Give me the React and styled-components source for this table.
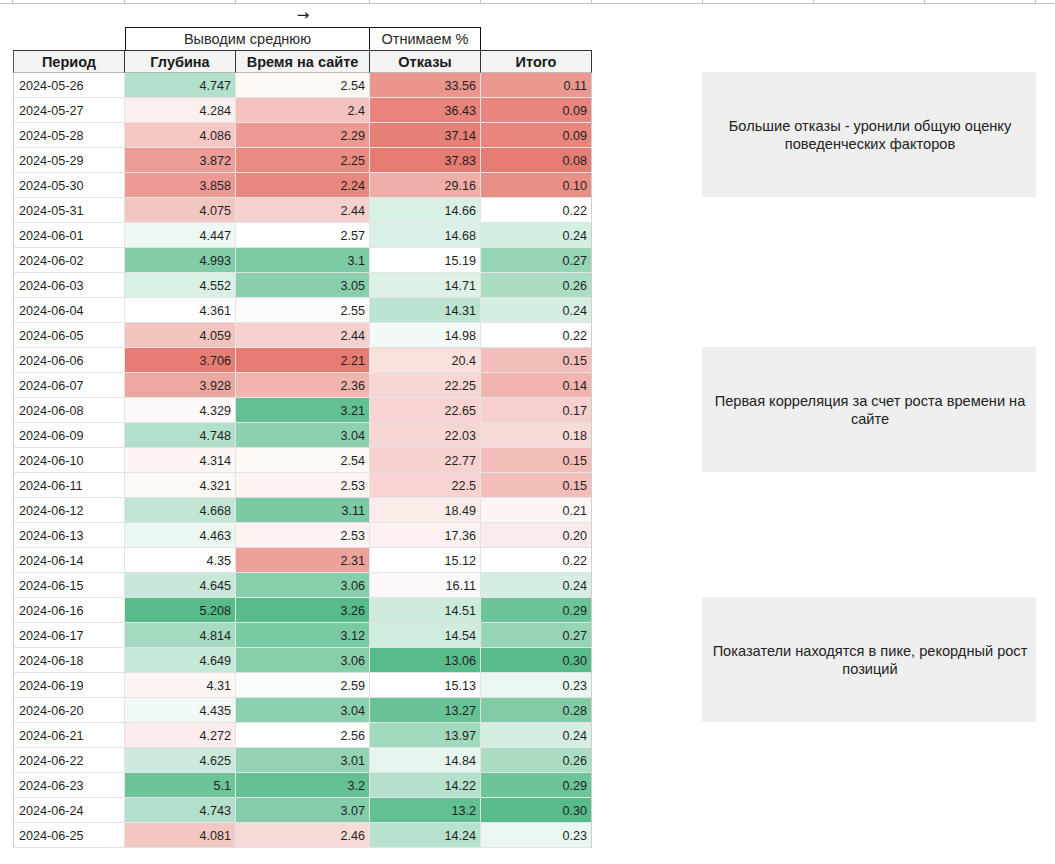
import React from "react";
import styled, { createGlobalStyle } from "styled-components";

const GlobalStyle = createGlobalStyle`
  body {
    margin: 0;
    background: #ffffff;
    font-family: "Liberation Sans", Arial, sans-serif;
    color: #1f1f1f;
  }
`;

const RED = [230, 124, 115];
const GREEN = [87, 187, 138];

const rows = [
  ["2024-05-26", "4.747", "2.54", "33.56", "0.11"],
  ["2024-05-27", "4.284", "2.4", "36.43", "0.09"],
  ["2024-05-28", "4.086", "2.29", "37.14", "0.09"],
  ["2024-05-29", "3.872", "2.25", "37.83", "0.08"],
  ["2024-05-30", "3.858", "2.24", "29.16", "0.10"],
  ["2024-05-31", "4.075", "2.44", "14.66", "0.22"],
  ["2024-06-01", "4.447", "2.57", "14.68", "0.24"],
  ["2024-06-02", "4.993", "3.1", "15.19", "0.27"],
  ["2024-06-03", "4.552", "3.05", "14.71", "0.26"],
  ["2024-06-04", "4.361", "2.55", "14.31", "0.24"],
  ["2024-06-05", "4.059", "2.44", "14.98", "0.22"],
  ["2024-06-06", "3.706", "2.21", "20.4", "0.15"],
  ["2024-06-07", "3.928", "2.36", "22.25", "0.14"],
  ["2024-06-08", "4.329", "3.21", "22.65", "0.17"],
  ["2024-06-09", "4.748", "3.04", "22.03", "0.18"],
  ["2024-06-10", "4.314", "2.54", "22.77", "0.15"],
  ["2024-06-11", "4.321", "2.53", "22.5", "0.15"],
  ["2024-06-12", "4.668", "3.11", "18.49", "0.21"],
  ["2024-06-13", "4.463", "2.53", "17.36", "0.20"],
  ["2024-06-14", "4.35", "2.31", "15.12", "0.22"],
  ["2024-06-15", "4.645", "3.06", "16.11", "0.24"],
  ["2024-06-16", "5.208", "3.26", "14.51", "0.29"],
  ["2024-06-17", "4.814", "3.12", "14.54", "0.27"],
  ["2024-06-18", "4.649", "3.06", "13.06", "0.30"],
  ["2024-06-19", "4.31", "2.59", "15.13", "0.23"],
  ["2024-06-20", "4.435", "3.04", "13.27", "0.28"],
  ["2024-06-21", "4.272", "2.56", "13.97", "0.24"],
  ["2024-06-22", "4.625", "3.01", "14.84", "0.26"],
  ["2024-06-23", "5.1", "3.2", "14.22", "0.29"],
  ["2024-06-24", "4.743", "3.07", "13.2", "0.30"],
  ["2024-06-25", "4.081", "2.46", "14.24", "0.23"],
];

const notes = [
  { row: 1, text: "Большие отказы - уронили общую оценку поведенческих факторов" },
  { row: 12, text: "Первая корреляция за счет роста времени на сайте" },
  { row: 22, text: "Показатели находятся в пике, рекордный рост позиций" },
];

const median = (list) => {
  const s = [...list].sort((a, b) => a - b);
  return s[Math.floor(s.length / 2)];
};

// conditional formatting: red -> white (median) -> green
const makeScale = (col, invert) => {
  const vals = rows.map((r) => parseFloat(r[col]));
  const min = Math.min(...vals);
  const max = Math.max(...vals);
  const mid = median(vals);
  const low = invert ? GREEN : RED;
  const high = invert ? RED : GREEN;
  return (v) => {
    let t;
    let c;
    if (v <= mid) {
      t = (mid - v) / (mid - min);
      c = low;
    } else {
      t = (v - mid) / (max - mid);
      c = high;
    }
    const mix = c.map((ch) => Math.round(255 + (ch - 255) * t));
    return `rgb(${mix[0]}, ${mix[1]}, ${mix[2]})`;
  };
};

const scales = {
  1: makeScale(1, false),
  2: makeScale(2, false),
  3: makeScale(3, true),
  4: makeScale(4, false),
};

const widths = [112, 111, 134, 111, 111];

const Page = styled.div`
  width: 1055px;
  height: 864px;
  overflow: hidden;
`;

const TopStrip = styled.div`
  display: flex;
  height: 3px;
  border-bottom: 1px solid #c4c4c4;
`;

const StripCell = styled.div`
  flex: ${(p) => (p.$w ? `0 0 ${p.$w}px` : "1")};
  box-sizing: border-box;
  border-right: ${(p) => (p.$w ? "1px solid #c4c4c4" : "none")};
`;

const Body = styled.div`
  display: flex;
  align-items: flex-start;
`;

const Sheet = styled.div`
  padding-left: 13px;
  display: flex;
  flex-direction: column;
`;

const Row = styled.div`
  display: flex;
  height: ${(p) => p.$h}px;
`;

const Blank = styled.div`
  flex: 0 0 ${(p) => p.$w}px;
  display: flex;
  align-items: center;
  justify-content: center;
  font-family: "DejaVu Sans", sans-serif;
  font-size: 15px;
  color: #222;
  padding-bottom: 2px;
`;

const GroupCell = styled.div`
  flex: 0 0 ${(p) => p.$w}px;
  box-sizing: border-box;
  border: 1px solid #111;
  border-bottom: none;
  margin-left: ${(p) => (p.$joined ? "-1px" : "0")};
  display: flex;
  align-items: center;
  justify-content: center;
  font-size: 14.5px;
  color: #2a2a2a;
`;

const HeadCell = styled.div`
  flex: 0 0 ${(p) => p.$w}px;
  box-sizing: border-box;
  background: #f3f3f3;
  border-top: 1px solid #333;
  border-right: 1px solid #333;
  border-left: ${(p) => (p.$first ? "1px solid #555" : "none")};
  border-bottom: 1px solid #b8b8b8;
  display: flex;
  align-items: center;
  justify-content: center;
  font-size: 14.5px;
  font-weight: bold;
  color: #1a1a1a;
`;

const DataCell = styled.div`
  flex: 0 0 ${(p) => p.$w}px;
  box-sizing: border-box;
  background: ${(p) => p.$bg || "#ffffff"};
  border-right: 1px solid ${(p) => (p.$last ? "#cfcfcf" : "#e3e3e3")};
  border-left: ${(p) => (p.$first ? "1px solid #cfcfcf" : "none")};
  border-bottom: 1px solid #e3e3e3;
  display: flex;
  align-items: center;
  justify-content: ${(p) => (p.$num ? "flex-end" : "flex-start")};
  padding: 1px 4px 0 5px;
  font-size: 12.6px;
  color: #1f1f1f;
`;

const Notes = styled.div`
  margin-left: 110px;
  margin-top: 68px;
  width: 334px;
  display: grid;
  grid-template-rows: repeat(31, 25px);
`;

const NoteBox = styled.div`
  grid-row: ${(p) => p.$row} / span 5;
  background: #efefef;
  display: flex;
  align-items: center;
  justify-content: center;
  text-align: center;
  padding: 0 6px 0 8px;
  font-size: 14.6px;
  line-height: 18px;
  color: #222;
`;

const stripWidths = [13, 112, 111, 134, 111, 111, 111, 111, 111, 111];

export default function App() {
  return (
    <Page>
      <GlobalStyle />
      <TopStrip>
        {stripWidths.map((w, i) => (
          <StripCell key={i} $w={w} />
        ))}
        <StripCell />
      </TopStrip>
      <Body>
        <Sheet>
          <Row $h={23}>
            <Blank $w={112} />
            <Blank $w={111} />
            <Blank $w={134}>→</Blank>
          </Row>
          <Row $h={23}>
            <Blank $w={112} />
            <GroupCell $w={245}>Выводим среднюю</GroupCell>
            <GroupCell $w={112} $joined>
              Отнимаем %
            </GroupCell>
          </Row>
          <Row $h={23}>
            {["Период", "Глубина", "Время на сайте", "Отказы", "Итого"].map((t, i) => (
              <HeadCell key={t} $w={widths[i]} $first={i === 0}>
                {t}
              </HeadCell>
            ))}
          </Row>
          {rows.map((r) => (
            <Row $h={25} key={r[0]}>
              {r.map((v, i) => (
                <DataCell
                  key={i}
                  $w={widths[i]}
                  $num={i > 0}
                  $first={i === 0}
                  $last={i === 4}
                  $bg={i > 0 ? scales[i](parseFloat(v)) : null}
                >
                  {v}
                </DataCell>
              ))}
            </Row>
          ))}
        </Sheet>
        <Notes>
          {notes.map((n) => (
            <NoteBox key={n.row} $row={n.row}>
              {n.text}
            </NoteBox>
          ))}
        </Notes>
      </Body>
    </Page>
  );
}
